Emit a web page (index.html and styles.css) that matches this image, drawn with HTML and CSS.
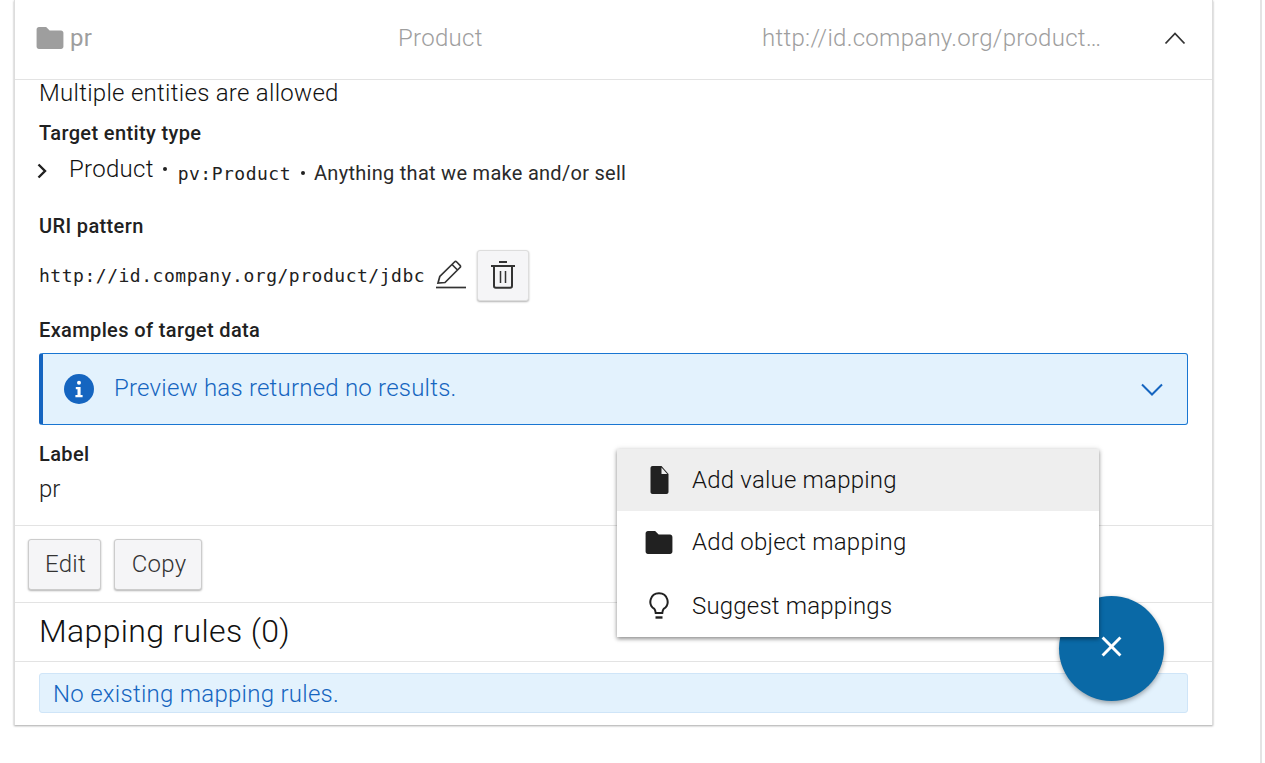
FILE: index.html
```html
<!DOCTYPE html>
<html lang="en">
<head>
<meta charset="utf-8">
<title>Mapping rule</title>
<link rel="stylesheet" href="styles.css">
</head>
<body>
<div class="page">
  <main class="card">
    <header class="rule-head">
      <div class="head-name">
        <svg class="head-folder" viewBox="4 6 24 18" width="28" height="22" preserveAspectRatio="none"><path d="M6.500 6h6.200l3 2.800h9.800c1.100 0 2 .9 2 2V22c0 1.100-.9 2-2 2H6.500c-1.100 0-2-.9-2-2V8c0-1.100.9-2 2-2z" fill="#9e9e9e"/></svg>
        <span class="name-text">pr</span>
      </div>
      <div class="head-type">Product</div>
      <div class="head-uri">http://id.company.org/product…</div>
      <svg class="head-chevron" viewBox="0 0 24 14" width="24" height="14"><path d="M2.500 12.500 12 2.500l9.500 10" fill="none" stroke="#333" stroke-width="1.800"/></svg>
    </header>
    <section class="details">
      <p class="multi">Multiple entities are allowed</p>
      <h3 class="label first-label">Target entity type</h3>
      <div class="type-row">
        <svg class="type-chevron" viewBox="0 0 10 16" width="10" height="16"><path d="M1.500 1.500 8 8l-6.500 6.500" fill="none" stroke="#212121" stroke-width="2.400"/></svg>
        <span class="type-name">Product</span>
        <span class="dot dot-a"></span>
        <code class="type-id">pv:Product</code>
        <span class="dot dot-b"></span>
        <span class="type-desc">Anything that we make and/or sell</span>
      </div>
      <h3 class="label uri-label">URI pattern</h3>
      <div class="uri-row">
        <code class="uri-text">http://id.company.org/product/jdbc</code>
        <svg class="edit-icon" viewBox="0 0 32 30" width="32" height="30"><path d="M3 23l1.800-6.500L19.500 2c.7-.7 1.500-.7 2.200 0L25 5.300c.7.7.7 1.500 0 2.200L10 22.500 3 23zM17 4.500l5.500 5.500" fill="none" stroke="#333" stroke-width="1.700"/><path d="M1 27.500h30" stroke="#333" stroke-width="1.700"/></svg>
        <button class="icon-btn" type="button" aria-label="Delete">
          <svg viewBox="0 0 26 30" width="26" height="30"><path d="M1 6h24M9 2h8" stroke="#333" stroke-width="2" fill="none"/><path d="M4 6v20c0 1 .7 1.800 1.800 1.800h14.400c1.100 0 1.800-.8 1.800-1.800V6" stroke="#333" stroke-width="2" fill="none"/><path d="M10.500 11v12M15.500 11v12" stroke="#333" stroke-width="1.500"/></svg>
        </button>
      </div>
      <h3 class="label examples-label">Examples of target data</h3>
      <div class="preview">
        <svg class="info" viewBox="0 0 30 30" width="30" height="30"><circle cx="15" cy="15" r="15" fill="#1565c0"/><circle cx="15" cy="8.800" r="2" fill="#fff"/><path d="M11.800 13h4.800v8h2v2.200h-7.200V21h2.100v-5.800h-1.700z" fill="#fff"/></svg>
        <span class="preview-text">Preview has returned no results.</span>
        <svg class="preview-chevron" viewBox="0 0 24 14" width="24" height="14"><path d="M2 2.500l10 10 10-10" fill="none" stroke="#1565c0" stroke-width="2"/></svg>
      </div>
      <h3 class="label label-label">Label</h3>
      <p class="label-value">pr</p>
    </section>
    <div class="actions">
      <button class="btn btn-edit" type="button">Edit</button>
      <button class="btn btn-copy" type="button">Copy</button>
    </div>
    <h2 class="rules-title">Mapping rules (0)</h2>
    <div class="rules-body">
      <div class="empty-note">No existing mapping rules.</div>
    </div>
  </main>
  <div class="rail"></div>
  <ul class="menu">
    <li class="menu-item is-active">
      <span class="menu-icon"><svg viewBox="0 0 18 28" width="23" height="28"><path d="M2 0h9l7 8v18c0 1.100-.9 2-2 2H2c-1.100 0-2-.9-2-2V2C0 .9.900 0 2 0z" fill="#212121"/><path d="M11 1.500V8h5.800z" fill="#eee"/></svg></span>
      <span>Add value mapping</span>
    </li>
    <li class="menu-item">
      <span class="menu-icon"><svg viewBox="4 6 24 18" width="28" height="23" preserveAspectRatio="none"><path d="M6.500 6h6.200l3 2.800h9.800c1.100 0 2 .9 2 2V22c0 1.100-.9 2-2 2H6.500c-1.100 0-2-.9-2-2V8c0-1.100.9-2 2-2z" fill="#212121"/></svg></span>
      <span>Add object mapping</span>
    </li>
    <li class="menu-item menu-item-last">
      <span class="menu-icon"><svg viewBox="0 0 20 28" width="20" height="28"><path d="M10 1.200a8.500 8.500 0 0 0-4.600 15.700c.8.700 1.100 2.300 1.300 4.100h6.600c.2-1.800.5-3.400 1.300-4.100A8.500 8.500 0 0 0 10 1.200z" fill="none" stroke="#212121" stroke-width="2"/><path d="M6.500 25.500h7" stroke="#212121" stroke-width="2.400"/></svg></span>
      <span>Suggest mappings</span>
    </li>
  </ul>
  <button class="fab" type="button" aria-label="Close">
    <svg class="fab-x" viewBox="0 0 20 20" width="21" height="21"><path d="M1.500 1.500l17 17M18.500 1.500l-17 17" stroke="#fff" stroke-width="2.800"/></svg>
  </button>
</div>
</body>
</html>
```

FILE: styles.css
```css
* { box-sizing: border-box; }
html, body { margin: 0; padding: 0; background: #fff; }
body { font-family: Roboto, "Liberation Sans", sans-serif; color: #212121; overflow: hidden; }
.page { position: relative; display: flex; align-items: flex-start; width: 1265px; height: 763px; padding-left: 14px; overflow: hidden; }

.card { width: 1199px; height: 725px; flex: none; border-left: 1px solid #ddd; border-right: 1px solid #ddd; box-shadow: 0 1px 2px rgba(0,0,0,.35); background: #fff; }
.rail { flex: none; width: 2px; height: 763px; margin-left: 47px; background: #e4e4e4; }

.rule-head { display: flex; align-items: center; height: 80px; padding-bottom: 4px; border-bottom: 1px solid #e3e3e3; color: #9e9e9e; font-size: 24px; font-weight: 300; letter-spacing: .28px; }
.head-name { display: flex; align-items: center; width: 383px; padding-left: 21px; gap: 6px; }
.name-text { font-weight: 400; }
.head-type { width: 364px; }
.head-uri { width: 401px; }
.head-chevron { flex: none; }

.details { padding: 0 24.500px 0 24px; height: 446px; border-bottom: 1px solid #e3e3e3; }
.multi { margin: 0; font-size: 24px; font-weight: 300; line-height: 26px; letter-spacing: .28px; color: #111; }
.label { margin: 0; font-size: 20px; font-weight: 500; line-height: 24px; letter-spacing: .37px; color: #212121; }
.first-label { margin-top: 15px; }
.type-row { display: flex; align-items: center; height: 36px; margin-top: 8px; }
.type-chevron { flex: none; margin: 0 22px 0 -2px; }
.type-name { font-size: 24px; font-weight: 300; position: relative; top: -2px; letter-spacing: .28px; color: #111; }
.dot { width: 4px; height: 4px; border-radius: 50%; background: #212121; flex: none; }
.dot-a { margin: 0 11px 5px 9px; }
.dot-b { margin: 0 9px 0 10px; position: relative; top: 2px; }
.type-id { font-family: "DejaVu Sans Mono", monospace; font-size: 18px; letter-spacing: .5px; position: relative; top: 2px; }
.type-desc { font-size: 20px; font-weight: 400; letter-spacing: .28px; color: #2a2a2a; position: relative; top: 2px; }
.uri-label { margin-top: 25px; }
.uri-row { display: flex; align-items: center; margin-top: 12px; height: 50px; }
.uri-text { font-family: "DejaVu Sans Mono", monospace; font-size: 18px; letter-spacing: .52px; }
.edit-icon { margin: 0 10px; flex: none; }
.icon-btn { display: flex; align-items: center; justify-content: center; width: 52px; height: 51px; padding: 0; background: #f5f5f7; border: 1px solid #ddd; border-radius: 3px; box-shadow: 0 1px 2px rgba(0,0,0,.3); }
.examples-label { margin-top: 18px; }
.preview { display: flex; align-items: center; height: 72px; margin-top: 11px; padding: 0 23px 0 21px; background: #e3f2fd; border: 1px solid #1976d2; border-left: 4px solid #1565c0; border-radius: 3px; color: #1565c0; }
.preview-text { flex: 1; margin-left: 20px; padding-bottom: 2px; font-size: 24px; font-weight: 300; letter-spacing: .22px; }
.label-label { margin-top: 17px; }
.label-value { margin: 10px 0 0; font-size: 24px; font-weight: 300; line-height: 26px; }

.actions { display: flex; gap: 13px; height: 77px; padding: 13px 0 0 13px; border-bottom: 1px solid #e3e3e3; }
.btn { height: 51px; padding: 0 0 2px 2px; font: 300 24px Roboto, sans-serif; letter-spacing: .25px; color: #333; background: #f5f5f7; border: 1px solid #ccc; border-radius: 3px; box-shadow: 0 1px 2px rgba(0,0,0,.3); }
.btn-edit { width: 73px; }
.btn-copy { width: 88px; }
.rules-title { margin: 0; height: 59px; padding-left: 24px; font-size: 32px; font-weight: 300; line-height: 56px; letter-spacing: .35px; color: #111; border-bottom: 1px solid #e3e3e3; }
.rules-body { padding: 11px 24.500px 0 24px; }
.empty-note { height: 40px; padding-left: 13px; line-height: 41px; font-size: 24px; font-weight: 300; letter-spacing: .27px; color: #1565c0; background: #e3f2fd; border: 1px solid #cfe5f8; border-radius: 3px; }

.menu { position: absolute; left: 617px; top: 449px; z-index: 2; width: 482px; height: 188px; margin: 0; padding: 0; list-style: none; background: #fff; box-shadow: 0 2px 4px rgba(0,0,0,.4), 0 0 6px rgba(0,0,0,.1); }
.menu-item { display: flex; align-items: center; height: 62px; font-size: 24px; font-weight: 300; letter-spacing: .2px; color: #111; }
.menu-item-last { height: 64px; padding-top: 2px; }
.menu-item.is-active { background: #eee; }
.menu-icon { display: flex; justify-content: center; width: 28px; margin: 0 19px 0 28px; }
.fab { position: absolute; left: 1059px; top: 596px; display: flex; align-items: center; justify-content: center; width: 105px; height: 105px; padding: 0 0 4px; border: 0; border-radius: 50%; background: #0a69a6; box-shadow: 0 2px 5px rgba(0,0,0,.35); }
```
